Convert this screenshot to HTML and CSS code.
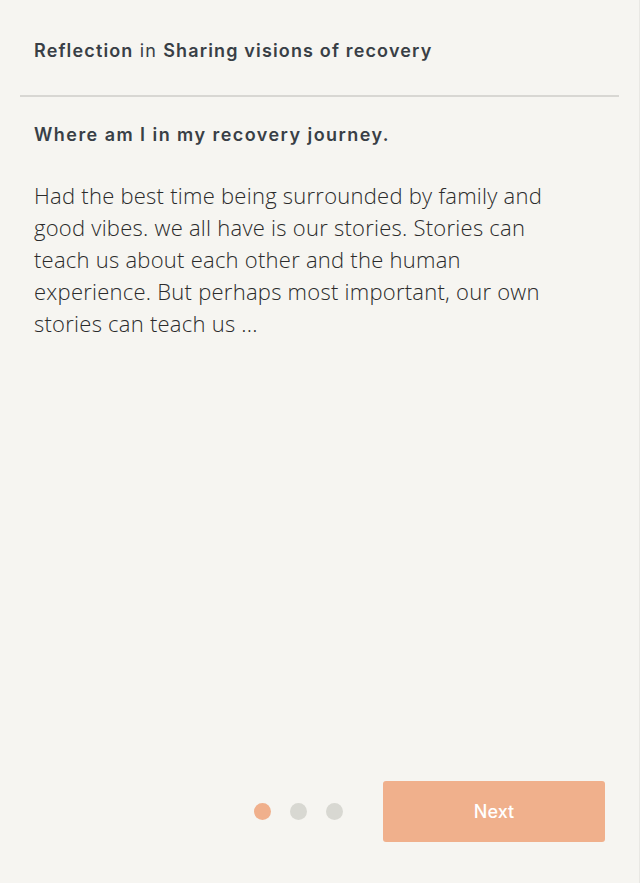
FILE: index.html
```html
<!DOCTYPE html>
<html lang="en">
<head>
<meta charset="utf-8">
<title>Reflection</title>
<link rel="stylesheet" href="styles.css">
</head>
<body>
<div class="page">
  <header class="header">
    <h1 class="crumb"><strong>Reflection</strong> <span class="in">in</span> <strong>Sharing visions of recovery</strong></h1>
  </header>
  <hr class="divider">
  <main class="content">
    <h2 class="title">Where am I in my recovery journey.</h2>
    <p class="body">Had the best time being surrounded by family and good vibes. we all have is our stories. Stories can teach us about each other and the human experience. But perhaps most important, our own stories can teach us ...</p>
  </main>
  <footer class="footer">
    <div class="dots">
      <span class="dot active"></span>
      <span class="dot"></span>
      <span class="dot"></span>
    </div>
    <button class="next">Next</button>
  </footer>
</div>
</body>
</html>
```
FILE: styles.css
```css
html, body {
  margin: 0;
  padding: 0;
  background: #f6f5f1;
}
.page {
  box-sizing: border-box;
  min-height: 100vh;
  display: flex;
  flex-direction: column;
  border-right: 1px solid #e9e8e4;
  font-family: "Inter", "Noto Sans", sans-serif;
  color: #393f46;
}
.header {
  padding: 39px 34px 0;
  height: 56px;
}
.crumb {
  margin: 0;
  font-size: 18px;
  line-height: 24px;
  font-weight: 400;
  letter-spacing: 1.15px;
}
.crumb strong {
  font-weight: 600;
}
.divider {
  margin: 0 20px;
  border: 0;
  height: 2px;
  background: #d8d7d3;
}
.content {
  padding: 26px 34px 0;
}
.title {
  margin: 0;
  font-size: 18px;
  line-height: 24px;
  font-weight: 600;
  letter-spacing: 1.45px;
}
.body {
  margin: 32px 0 0;
  width: 522px;
  font-family: "Open Sans", "Noto Sans", sans-serif;
  font-size: 22px;
  line-height: 32px;
  font-weight: 300;
  letter-spacing: 0.25px;
  color: #2b2b2b;
}
.footer {
  margin-top: auto;
  display: flex;
  align-items: center;
  justify-content: flex-end;
  gap: 40px;
  padding: 0 34px 41px 0;
}
.dots {
  display: flex;
  gap: 19px;
}
.dot {
  width: 17px;
  height: 17px;
  border-radius: 50%;
  background: #d8d8d2;
}
.dot.active {
  background: #f0b08c;
}
.next {
  width: 222px;
  height: 61px;
  border: 0;
  border-radius: 3px;
  background: #f0b08c;
  color: #ffffff;
  font-family: "Inter", "Noto Sans", sans-serif;
  font-size: 18px;
  font-weight: 500;
}
```
